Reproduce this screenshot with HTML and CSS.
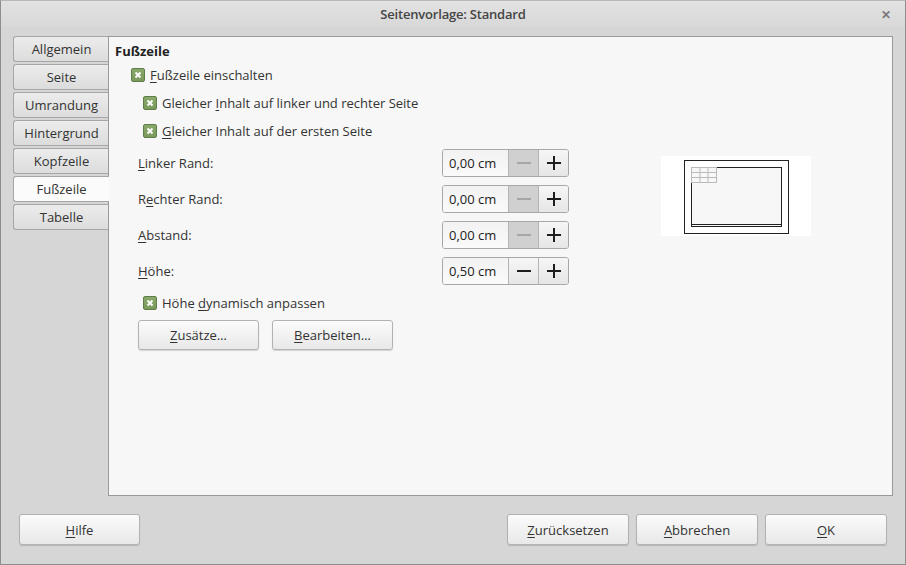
FILE: index.html
```html
<!DOCTYPE html>
<html lang="de">
<head>
    <meta charset="UTF-8">
    <title>Seitenvorlage: Standard</title>
    <link rel="stylesheet" href="styles.css">
</head>
<body>
    <div class="window">
        <div class="titlebar">
            <span class="title">Seitenvorlage: Standard</span>
            <span class="close">&#x2715;</span>
        </div>

        <div class="main">
            <div class="tabs">
                <div class="tab">Allgemein</div>
                <div class="tab">Seite</div>
                <div class="tab">Umrandung</div>
                <div class="tab">Hintergrund</div>
                <div class="tab">Kopfzeile</div>
                <div class="tab active">Fußzeile</div>
                <div class="tab">Tabelle</div>
            </div>

            <div class="panel">
                <div class="content">
                    <div class="heading">Fußzeile</div>

                    <label class="check level1">
                        <span class="box"><svg width="8" height="8" viewBox="0 0 8 8"><path d="M1.5 1.5L6.5 6.5M6.5 1.5L1.5 6.5" stroke="#fff" stroke-width="2"/></svg></span>
                        <span><u>F</u>ußzeile einschalten</span>
                    </label>
                    <label class="check level2">
                        <span class="box"><svg width="8" height="8" viewBox="0 0 8 8"><path d="M1.5 1.5L6.5 6.5M6.5 1.5L1.5 6.5" stroke="#fff" stroke-width="2"/></svg></span>
                        <span>Gleicher <u>I</u>nhalt auf linker und rechter Seite</span>
                    </label>
                    <label class="check level2">
                        <span class="box"><svg width="8" height="8" viewBox="0 0 8 8"><path d="M1.5 1.5L6.5 6.5M6.5 1.5L1.5 6.5" stroke="#fff" stroke-width="2"/></svg></span>
                        <span><u>G</u>leicher Inhalt auf der ersten Seite</span>
                    </label>

                    <div class="fields">
                        <div class="field">
                            <span class="label"><u>L</u>inker Rand:</span>
                            <div class="spin">
                                <span class="value">0,00 cm</span>
                                <span class="step disabled"><svg width="16" height="16" viewBox="0 0 16 16"><path d="M1 8H15" stroke-width="2"/></svg></span>
                                <span class="step"><svg width="16" height="16" viewBox="0 0 16 16"><path d="M1 8H15M8 1V15" stroke-width="2"/></svg></span>
                            </div>
                        </div>
                        <div class="field">
                            <span class="label">R<u>e</u>chter Rand:</span>
                            <div class="spin">
                                <span class="value">0,00 cm</span>
                                <span class="step disabled"><svg width="16" height="16" viewBox="0 0 16 16"><path d="M1 8H15" stroke-width="2"/></svg></span>
                                <span class="step"><svg width="16" height="16" viewBox="0 0 16 16"><path d="M1 8H15M8 1V15" stroke-width="2"/></svg></span>
                            </div>
                        </div>
                        <div class="field">
                            <span class="label"><u>A</u>bstand:</span>
                            <div class="spin">
                                <span class="value">0,00 cm</span>
                                <span class="step disabled"><svg width="16" height="16" viewBox="0 0 16 16"><path d="M1 8H15" stroke-width="2"/></svg></span>
                                <span class="step"><svg width="16" height="16" viewBox="0 0 16 16"><path d="M1 8H15M8 1V15" stroke-width="2"/></svg></span>
                            </div>
                        </div>
                        <div class="field">
                            <span class="label"><u>H</u>öhe:</span>
                            <div class="spin">
                                <span class="value">0,50 cm</span>
                                <span class="step"><svg width="16" height="16" viewBox="0 0 16 16"><path d="M1 8H15" stroke-width="2"/></svg></span>
                                <span class="step"><svg width="16" height="16" viewBox="0 0 16 16"><path d="M1 8H15M8 1V15" stroke-width="2"/></svg></span>
                            </div>
                        </div>
                    </div>

                    <label class="check level2 dyn">
                        <span class="box"><svg width="8" height="8" viewBox="0 0 8 8"><path d="M1.5 1.5L6.5 6.5M6.5 1.5L1.5 6.5" stroke="#fff" stroke-width="2"/></svg></span>
                        <span>Höhe <u>d</u>ynamisch anpassen</span>
                    </label>

                    <div class="actions">
                        <button class="btn small"><u>Z</u>usätze…</button>
                        <button class="btn small"><u>B</u>earbeiten…</button>
                    </div>
                </div>

                <div class="preview">
                    <svg width="150" height="80" viewBox="0 0 150 80">
                        <rect x="0" y="0" width="150" height="80" fill="#fff"/>
                        <rect x="23.5" y="4.5" width="104" height="73" fill="none" stroke="#222"/>
                        <rect x="30.5" y="11.5" width="90" height="59" fill="#f7f7f7" stroke="#222"/>
                        <line x1="30" y1="68.5" x2="121" y2="68.5" stroke="#222"/>
                        <rect x="30.5" y="11.5" width="25" height="15" fill="#f7f7f7" stroke="#bbb"/>
                        <path d="M39 11.5V26.5M47 11.5V26.5M30.5 16.5H55.5M30.5 21.5H55.5" stroke="#bbb" fill="none"/>
                    </svg>
                </div>
            </div>
        </div>

        <div class="footer">
            <button class="btn"><u>H</u>ilfe</button>
            <div class="right">
                <button class="btn"><u>Z</u>urücksetzen</button>
                <button class="btn"><u>A</u>bbrechen</button>
                <button class="btn"><u>O</u>K</button>
            </div>
        </div>
    </div>
</body>
</html>
```

FILE: styles.css
```css
/* Dialog frame */
body {
    margin: 0;
    font-family: "Open Sans", "Noto Sans", sans-serif;
    font-size: 13px;
    color: #3c3c3c;
}
u {
    text-decoration-thickness: 1px;
    text-underline-offset: 2px;
}
.window {
    width: 906px;
    height: 565px;
    box-sizing: border-box;
    border: 1px solid #8e8e8e;
    border-top-color: #b8b8b8;
    background: #d6d6d6;
    display: flex;
    flex-direction: column;
}
.titlebar {
    height: 26px;
    background: linear-gradient(#e2e2e2, #d8d8d8);
    display: flex;
    align-items: center;
    justify-content: center;
    position: relative;
}
.title {
    font-size: 13px;
    font-weight: 600;
    color: #454545;
    letter-spacing: -0.2px;
}
.close {
    position: absolute;
    right: 14px;
    top: 5px;
    font-size: 12px;
    font-weight: bold;
    color: #7a7a7a;
}

/* Tabs + page */
.main {
    display: flex;
    padding: 9px 12px 0 12px;
    height: 460px;
}
.tabs {
    width: 96px;
    display: flex;
    flex-direction: column;
    gap: 2px;
    margin-right: -1px;
}
.tab {
    height: 24px;
    line-height: 24px;
    text-align: center;
    border: 1px solid #a6a6a6;
    border-right: none;
    border-radius: 3px 0 0 3px;
    background: linear-gradient(#ececec, #dcdcdc);
    color: #333;
}
.tab.active {
    background: #fbfbfb;
    position: relative;
    z-index: 1;
}
.panel {
    flex: 1;
    border: 1px solid #9a9a9a;
    background: #f7f7f7;
    display: flex;
}
.content {
    width: 470px;
    padding: 5px 0 0 6px;
}
.heading {
    font-weight: bold;
    color: #222;
    height: 19px;
}

/* Check boxes */
.check {
    display: flex;
    align-items: center;
    height: 28px;
    color: #333;
}
.check.level1 {
    padding-left: 16px;
}
.check.level2 {
    padding-left: 28px;
}
.box {
    width: 12px;
    height: 12px;
    border: 1px solid #5f7d48;
    border-radius: 2px;
    background: linear-gradient(#89a96b, #7a9a5c);
    display: flex;
    align-items: center;
    justify-content: center;
    margin-right: 5px;
}

/* Spin fields */
.fields {
    padding: 4px 0 0 23px;
    display: flex;
    flex-direction: column;
    gap: 8px;
}
.field {
    display: flex;
    align-items: center;
    justify-content: space-between;
    width: 431px;
}
.label {
    color: #333;
}
.spin {
    display: flex;
    height: 26px;
    border: 1px solid #a8a8a8;
    border-radius: 3px;
    overflow: hidden;
    background: #f9f9f9;
}
.value {
    width: 65px;
    padding-left: 6px;
    box-sizing: border-box;
    line-height: 26px;
    color: #222;
    background: linear-gradient(#f2f2f2, #fafafa);
}
.step {
    width: 29px;
    border-left: 1px solid #b4b4b4;
    display: flex;
    align-items: center;
    justify-content: center;
    background: linear-gradient(#f6f6f6, #e6e6e6);
}
.step svg {
    stroke: #1e1e1e;
}
.step.disabled {
    background: #d0d0d0;
}
.step.disabled svg {
    stroke: #a6a6a6;
}
.dyn {
    margin-top: 4px;
    height: 28px;
}

/* Buttons */
.actions {
    display: flex;
    gap: 13px;
    padding-left: 23px;
    margin-top: 3px;
}
.btn {
    width: 121px;
    height: 31px;
    font-family: inherit;
    font-size: 13px;
    color: #333;
    border: 1px solid #b2b2b2;
    border-radius: 3px;
    background: linear-gradient(#fbfbfb, #e8e8e8);
    box-shadow: 0 1px 1px rgba(0, 0, 0, 0.15);
    padding: 0;
}
.btn.small {
    height: 30px;
}

/* Preview */
.preview {
    padding: 119px 0 0 76px;
}

/* Bottom row */
.footer {
    display: flex;
    justify-content: space-between;
    padding: 18px 18px 0 18px;
}
.footer .right {
    display: flex;
    gap: 7px;
}
.footer .right .btn {
    width: 122px;
}
```
